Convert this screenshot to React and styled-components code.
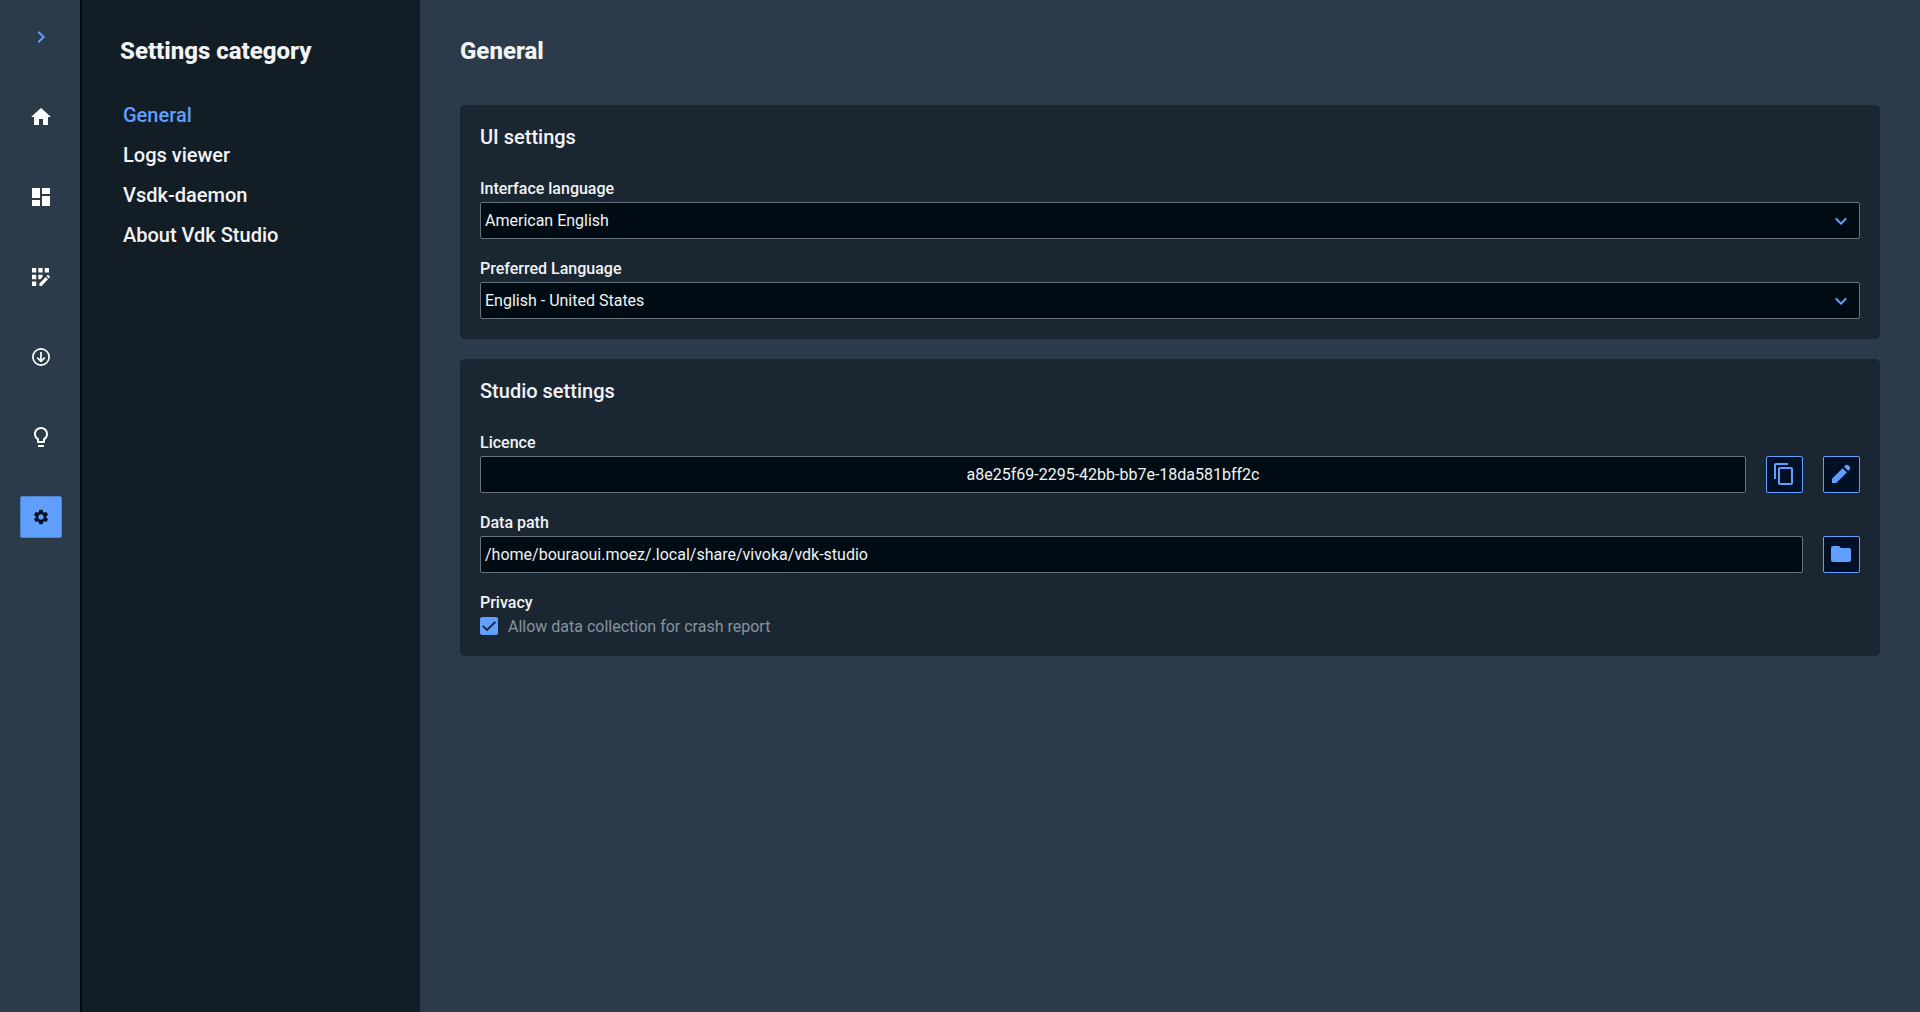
import React, { useState } from "react";
import styled, { createGlobalStyle, css } from "styled-components";
import {
  MdChevronRight,
  MdContentCopy,
  MdDashboard,
  MdExpandMore,
  MdFolder,
  MdHome,
  MdLightbulbOutline,
  MdSettings,
} from "react-icons/md";

const color = {
  page: "#2b3b49",
  panel: "#131d25",
  card: "#1a2733",
  field: "#000b13",
  fieldBorder: "#67737b",
  button: "#021026",
  accent: "#619fff",
  text: "#f2f3f4",
  muted: "#87939c",
};

const GlobalStyle = createGlobalStyle`
  *, *::before, *::after { box-sizing: border-box; }
  body {
    margin: 0;
    background: ${color.page};
    color: ${color.text};
    font-family: Roboto, "Liberation Sans", sans-serif;
    font-size: 16px;
    line-height: 19px;
  }
  button, input, select { font: inherit; color: inherit; }
  svg { display: block; flex: none; }
`;

const Layout = styled.div`
  display: flex;
  min-height: 100vh;
`;

const Sidebar = styled.nav`
  display: flex;
  flex-direction: column;
  align-items: center;
  flex: none;
  gap: 38px;
  width: 82px;
  padding-top: 16px;
  box-shadow: inset -2px 0 ${color.field};
`;

const NavButton = styled.button`
  display: grid;
  place-items: center;
  width: 42px;
  height: 42px;
  padding: 0;
  border: 1px solid transparent;
  border-radius: 2px;
  background: transparent;
  color: ${(p) => (p.$accent ? color.accent : "#ffffff")};
  cursor: pointer;
  ${(p) =>
    p.$active &&
    css`
      border-color: #5083cf;
      background: ${color.accent};
      color: ${color.button};
    `}
`;

const CategoryPanel = styled.aside`
  flex: none;
  width: 338px;
  padding: 37px 38px;
  background: ${color.panel};
`;

const Heading = styled.h1`
  margin: 0;
  font-size: 24px;
  font-weight: 800;
  line-height: 28px;
`;

const CategoryList = styled.ul`
  display: flex;
  flex-direction: column;
  gap: 16px;
  margin: 38px 0 0;
  padding: 0 3px;
  list-style: none;
`;

const CategoryLink = styled.a`
  display: block;
  color: ${(p) => (p.$active ? color.accent : color.text)};
  font-size: 20px;
  font-weight: 500;
  line-height: 24px;
  text-decoration: none;
`;

const Main = styled.main`
  display: flex;
  flex: 1;
  flex-direction: column;
  min-width: 0;
  padding: 37px 40px;
`;

const Cards = styled.div`
  display: flex;
  flex-direction: column;
  gap: 20px;
  margin-top: 40px;
`;

const Card = styled.section`
  display: flex;
  flex-direction: column;
  gap: 20px;
  padding: 20px;
  border-radius: 5px;
  background: ${color.card};
`;

const CardTitle = styled.h2`
  margin: 0 0 10px;
  font-size: 20px;
  font-weight: 500;
  line-height: 24px;
`;

const Field = styled.div`
  display: flex;
  flex-direction: column;
  gap: 4px;
`;

const FieldLabel = styled.label`
  font-weight: 500;
`;

const FieldRow = styled.div`
  display: flex;
  gap: 20px;
`;

const control = css`
  width: 100%;
  min-width: 0;
  height: 37px;
  padding: 0 4px;
  border: 1px solid ${color.fieldBorder};
  border-radius: 2px;
  background: ${color.field};
`;

const TextInput = styled.input`
  ${control}
  flex: 1;
  text-align: ${(p) => (p.$centered ? "center" : "left")};
`;

const SelectBox = styled.div`
  display: grid;
  align-items: center;

  > * { grid-area: 1 / 1; }

  > svg {
    justify-self: end;
    margin-right: 7px;
    color: ${color.accent};
    pointer-events: none;
  }
`;

const Select = styled.select`
  ${control}
  appearance: none;
`;

const IconButton = styled.button`
  display: grid;
  flex: none;
  place-items: center;
  width: 37px;
  height: 37px;
  padding: 0 1px 1px 0;
  border: 1px solid ${color.accent};
  border-radius: 2px;
  background: ${color.button};
  color: ${color.accent};
  cursor: pointer;
`;

const Group = styled.fieldset`
  display: flex;
  flex-direction: column;
  gap: 4px;
  min-width: 0;
  margin: 0;
  padding: 0;
  border: 0;
`;

const GroupLabel = styled.legend`
  margin-bottom: 4px;
  padding: 0;
  font-weight: 500;
`;

const CheckLabel = styled.label`
  display: flex;
  align-items: center;
  gap: 10px;
  height: 20px;
  color: ${color.muted};
`;

const CheckBox = styled.span`
  display: grid;
  place-items: center;

  > * { grid-area: 1 / 1; }

  > svg {
    color: ${color.card};
    pointer-events: none;
  }
`;

const CheckInput = styled.input`
  width: 18px;
  height: 18px;
  margin: 0;
  border: 1px solid ${color.accent};
  border-radius: 2px;
  appearance: none;

  &:checked { background: ${color.accent}; }
`;

function GridEditIcon({ size }) {
  return (
    <svg width={size} height={size} viewBox="4 4 17 16" preserveAspectRatio="none" fill="currentColor">
      <path d="M4 4h4v4H4zM10 4h4v4h-4zM16 4h4v4h-4zM4 10h4v4H4zM4 16h4v4H4z" />
      <path d="M14 12.03V10h-4v4h2.03zM11 17.86V20h2.1l5.98-5.97-2.12-2.12zM20.85 11.56l-1.41-1.41a.5.5 0 0 0-.71 0l-1.06 1.06 2.12 2.12 1.06-1.06c.2-.2.2-.51 0-.71z" />
    </svg>
  );
}

function CircleDownIcon({ size }) {
  return (
    <svg width={size} height={size} viewBox="0 0 18 18" fill="none" stroke="currentColor" strokeWidth="1.7">
      <circle cx="9" cy="9" r="8.1" />
      <path d="M9 4v9.2M5.2 9.6 9 13.3l3.8-3.7" />
    </svg>
  );
}

function PencilIcon({ size }) {
  return (
    <svg width={size} height={size} viewBox="0 0 24 24" fill="currentColor">
      <path d="M19.3 8.925l-4.25-4.2 1.4-1.4q.575-.575 1.413-.575t1.412.575l1.4 1.4q.575.575.6 1.388t-.55 1.387zM17.85 10.4 7.25 21H3v-4.25l10.6-10.6z" />
    </svg>
  );
}

function CheckIcon({ size }) {
  return (
    <svg width={size} height={size} viewBox="0 0 18 18" fill="none" stroke="currentColor" strokeWidth="1.8">
      <path d="M2.7 8.9 7 13l8.4-8.2" />
    </svg>
  );
}

const NAV = [
  { label: "Expand menu", icon: MdChevronRight, size: 24, accent: true },
  { label: "Home", icon: MdHome, size: 24 },
  { label: "Dashboard", icon: MdDashboard, size: 24 },
  { label: "Projects", icon: GridEditIcon, size: 18 },
  { label: "Downloads", icon: CircleDownIcon, size: 18 },
  { label: "Tips", icon: MdLightbulbOutline, size: 24 },
  { label: "Settings", icon: MdSettings, size: 18, active: true },
];

const CATEGORIES = ["General", "Logs viewer", "Vsdk-daemon", "About Vdk Studio"];

function SelectField({ id, label, options }) {
  return (
    <Field>
      <FieldLabel htmlFor={id}>{label}</FieldLabel>
      <SelectBox>
        <Select id={id}>
          {options.map((option) => (
            <option key={option}>{option}</option>
          ))}
        </Select>
        <MdExpandMore size={24} />
      </SelectBox>
    </Field>
  );
}

export default function App() {
  const [allowReports, setAllowReports] = useState(true);

  return (
    <>
      <GlobalStyle />
      <Layout>
        <Sidebar aria-label="Main">
          {NAV.map(({ label, icon: Icon, size, accent, active }) => (
            <NavButton
              key={label}
              type="button"
              aria-label={label}
              $accent={accent}
              $active={active}
            >
              <Icon size={size} />
            </NavButton>
          ))}
        </Sidebar>

        <CategoryPanel>
          <Heading as="h2">Settings category</Heading>
          <CategoryList>
            {CATEGORIES.map((name, index) => (
              <li key={name}>
                <CategoryLink href="#" $active={index === 0}>
                  {name}
                </CategoryLink>
              </li>
            ))}
          </CategoryList>
        </CategoryPanel>

        <Main>
          <Heading>General</Heading>
          <Cards>
            <Card>
              <CardTitle>UI settings</CardTitle>
              <SelectField
                id="interface-language"
                label="Interface language"
                options={["American English"]}
              />
              <SelectField
                id="preferred-language"
                label="Preferred Language"
                options={["English - United States"]}
              />
            </Card>

            <Card>
              <CardTitle>Studio settings</CardTitle>
              <Field>
                <FieldLabel htmlFor="licence">Licence</FieldLabel>
                <FieldRow>
                  <TextInput
                    id="licence"
                    type="text"
                    readOnly
                    $centered
                    value="a8e25f69-2295-42bb-bb7e-18da581bff2c"
                  />
                  <IconButton type="button" aria-label="Copy licence">
                    <MdContentCopy size={24} />
                  </IconButton>
                  <IconButton type="button" aria-label="Edit licence">
                    <PencilIcon size={24} />
                  </IconButton>
                </FieldRow>
              </Field>
              <Field>
                <FieldLabel htmlFor="data-path">Data path</FieldLabel>
                <FieldRow>
                  <TextInput
                    id="data-path"
                    type="text"
                    readOnly
                    value="/home/bouraoui.moez/.local/share/vivoka/vdk-studio"
                  />
                  <IconButton type="button" aria-label="Choose folder">
                    <MdFolder size={24} />
                  </IconButton>
                </FieldRow>
              </Field>
              <Group>
                <GroupLabel>Privacy</GroupLabel>
                <CheckLabel>
                  <CheckBox>
                    <CheckInput
                      type="checkbox"
                      checked={allowReports}
                      onChange={(event) => setAllowReports(event.target.checked)}
                    />
                    {allowReports && <CheckIcon size={18} />}
                  </CheckBox>
                  Allow data collection for crash report
                </CheckLabel>
              </Group>
            </Card>
          </Cards>
        </Main>
      </Layout>
    </>
  );
}
